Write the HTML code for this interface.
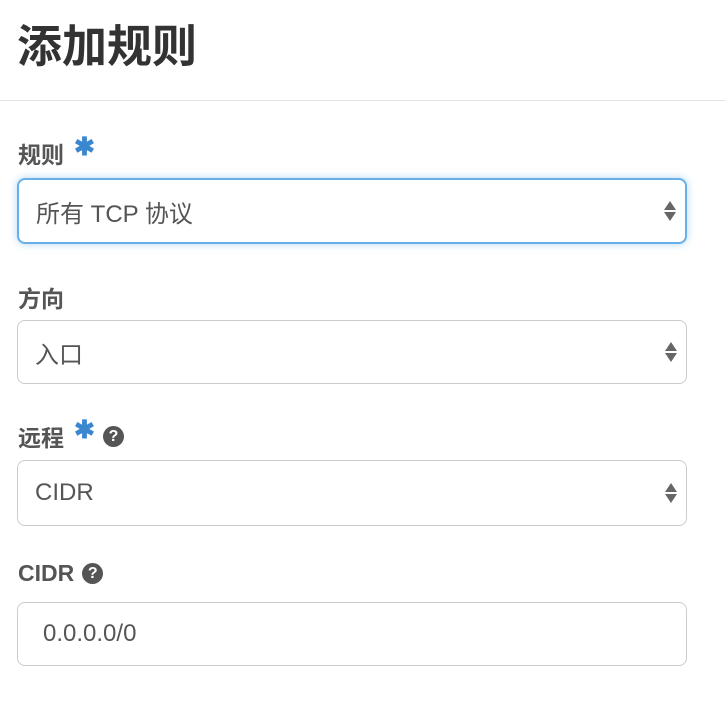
<!DOCTYPE html>
<html><head><meta charset="utf-8"><style>
body{margin:0;background:#fff;font-family:"Liberation Sans","Noto Sans CJK SC",sans-serif;width:726px;height:723px;overflow:hidden;position:relative}
.t{position:absolute;left:17px;top:10px;font-size:45px;font-weight:bold;color:#333}
.hr{position:absolute;left:0;right:0;top:100px;height:1px;background:#e5e5e5}
.l{position:absolute;left:18px;font-size:23px;font-weight:bold;color:#555;display:flex;align-items:center}
.star{color:#3a87d0;font-size:25px;margin-left:10px;position:relative;top:-6px}
.q{display:inline-block;width:21px;height:21px;border-radius:50%;background:#555;color:#fff;font-size:16px;text-align:center;line-height:21px;margin-left:8px;font-weight:bold}
.b{position:absolute;left:17px;width:670px;border:1px solid #ccc;border-radius:8px;box-sizing:border-box;font-size:24px;color:#555;padding-left:17px;display:flex;align-items:center}
.b.f{border:2px solid #66afe9;box-shadow:0 0 8px rgba(102,175,233,.5)}
.ar{position:absolute;right:9px;top:50%;transform:translateY(-50%);width:12px}
.ar:before,.ar:after{content:"";display:block;width:0;height:0;border-left:6px solid transparent;border-right:6px solid transparent}
.ar:before{border-bottom:9px solid #666;margin-bottom:2px}
.ar:after{border-top:9px solid #666}
</style></head><body>
<div class="t">添加规则</div>
<div class="hr"></div>
<div class="l" style="top:136px">规则<span class="star">✱</span></div>
<div class="b f" style="top:178px;height:66px">所有 TCP 协议<span class="ar"></span></div>
<div class="l" style="top:280px">方向</div>
<div class="b" style="top:320px;height:64px">入口<span class="ar"></span></div>
<div class="l" style="top:419px">远程<span class="star">✱</span><span class="q">?</span></div>
<div class="b" style="top:460px;height:66px">CIDR<span class="ar"></span></div>
<div class="l" style="top:560px">CIDR<span class="q">?</span></div>
<div class="b" style="top:602px;height:64px;padding-left:25px">0.0.0.0/0</div>
</body></html>
